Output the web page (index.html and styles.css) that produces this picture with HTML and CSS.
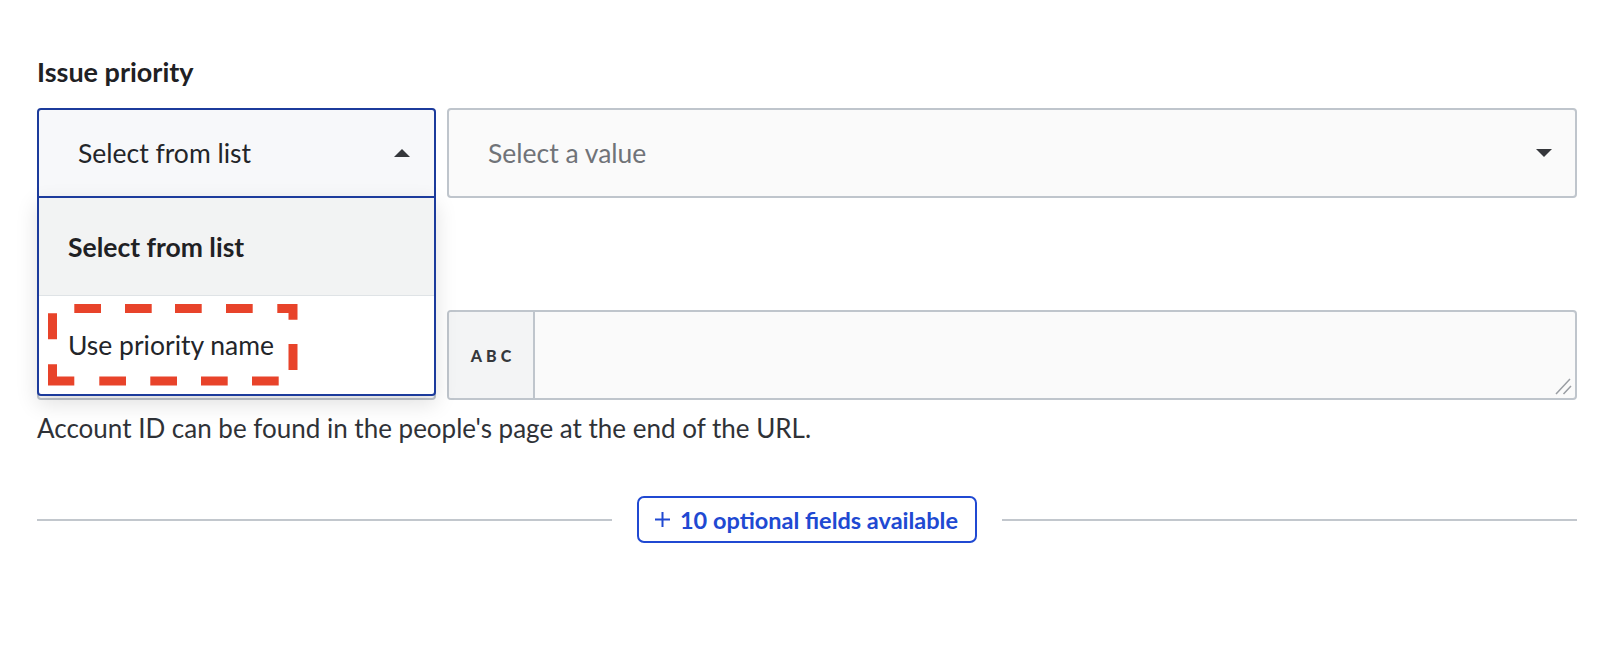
FILE: index.html
```html
<!DOCTYPE html>
<html lang="en">
<head>
<meta charset="utf-8">
<title>Issue priority</title>
<link rel="stylesheet" href="styles.css">
</head>
<body>
<div class="page">
  <div class="field-label">Issue priority</div>

  <div class="row">
    <div class="picker">
      <div class="select select-open">
        <span class="select-text">Select from list</span>
        <svg class="caret" width="16" height="8" viewBox="0 0 16 8"><path d="M0 8 L8 0 L16 8 Z" fill="#35373b"/></svg>
      </div>
      <div class="menu">
        <div class="menu-header">Select from list</div>
        <div class="menu-option">
          <span>Use priority name</span>
          <svg class="annot" width="250" height="82" viewBox="0 0 250 82">
            <path d="M4.5 4.5 H245 V77 H4.5 Z" fill="none" stroke="#e8432a" stroke-width="9" stroke-linejoin="miter" stroke-dasharray="0 21.8 26.7 24 26.7 23.3 26.7 24.3 26.7 24.6 26.9 24.3 26 25.3 26.7 24.3 26.7 24 26.7 24.3 26.7 25 38.5 25 26 3.8"/>
          </svg>
        </div>
      </div>
    </div>
    <div class="select select-value">
      <span class="placeholder">Select a value</span>
      <svg class="caret" width="16" height="8" viewBox="0 0 16 8"><path d="M0 0 L16 0 L8 8 Z" fill="#35373b"/></svg>
    </div>
  </div>

  <div class="row row-second">
    <div class="select select-under"></div>
    <div class="text-field">
      <div class="prefix">ABC</div>
      <div class="text-body">
        <svg class="grip" width="20" height="20" viewBox="0 0 20 20"><path d="M16 2 L2 17 M17 9 L9.5 17" stroke="#9a9ea3" stroke-width="1.5" fill="none"/></svg>
      </div>
    </div>
  </div>

  <p class="help">Account ID can be found in the people's page at the end of the URL.</p>

  <div class="divider">
    <span class="rule"></span>
    <button class="more" type="button">
      <svg width="15" height="15" viewBox="0 0 15 15"><path d="M7.5 0 V15 M0 7.5 H15" stroke="#2049d2" stroke-width="2"/></svg>
      <span>10 optional fields available</span>
    </button>
    <span class="rule"></span>
  </div>
</div>
</body>
</html>
```

FILE: styles.css
```css
* { box-sizing: border-box; }

html, body {
  margin: 0;
  padding: 0;
  background: #ffffff;
}

body {
  font-family: "Lato", "Liberation Sans", sans-serif;
  color: #232529;
  width: 1608px;
  height: 650px;
  overflow: hidden;
}

.page {
  padding: 56px 31px 0 37px;
}

.field-label {
  font-weight: 700;
  font-size: 27px;
  line-height: 32px;
  height: 32px;
  margin-bottom: 20px;
  color: #1f2124;
}

.row {
  display: flex;
  gap: 11px;
  height: 90px;
}

.row-second {
  margin-top: 112px;
}

.picker {
  position: relative;
  width: 399px;
  flex: none;
}

.select {
  height: 90px;
  border: 2px solid #bfc5cc;
  border-radius: 4px;
  background: #fafafa;
  display: flex;
  align-items: center;
  justify-content: space-between;
  padding: 0 24px 0 39px;
  font-size: 26.5px;
}

.select-open {
  border-color: #1c3b9c;
  border-radius: 4px 4px 0 0;
  background: #f7f8fa;
  padding-right: 24px;
}

.select-value {
  flex: 1;
  padding-left: 39px;
  padding-right: 23px;
}

.select-under {
  width: 399px;
  flex: none;
}

.select-text { color: #232529; }

.placeholder { color: #707378; }

.caret { flex: none; }

.menu {
  position: absolute;
  top: 88px;
  left: 0;
  width: 399px;
  z-index: 10;
  background: #ffffff;
  border: 2px solid #1c3b9c;
  border-radius: 0 0 4px 4px;
  box-shadow: 0 8px 22px rgba(0, 0, 0, 0.12);
}

.menu-header {
  height: 98px;
  display: flex;
  align-items: center;
  padding-left: 29px;
  background: #f2f3f3;
  border-bottom: 1px solid #dfe3e6;
  font-weight: 700;
  font-size: 26.5px;
  color: #1f2124;
}

.menu-option {
  position: relative;
  height: 98px;
  display: flex;
  align-items: center;
  padding-left: 29px;
  font-size: 26.5px;
  color: #232529;
}

.annot {
  position: absolute;
  left: 9px;
  top: 8px;
}

.text-field {
  flex: 1;
  display: flex;
  border: 2px solid #bfc5cc;
  border-radius: 4px;
  background: #fafafa;
  overflow: hidden;
}

.prefix {
  width: 86px;
  flex: none;
  display: flex;
  align-items: center;
  justify-content: center;
  padding-left: 4px;
  background: #f3f4f5;
  border-right: 2px solid #bfc5cc;
  font-weight: 900;
  font-size: 16px;
  letter-spacing: 4px;
  color: #35383c;
}

.text-body {
  flex: 1;
  position: relative;
}

.grip {
  position: absolute;
  right: 1px;
  bottom: 1px;
}

.help {
  margin: 12px 0 0 0;
  font-size: 26px;
  line-height: 32px;
  color: #2f3237;
}

.divider {
  margin-top: 52px;
  display: flex;
  align-items: center;
  gap: 25px;
}

.rule {
  flex: 1;
  height: 2px;
  background: #c2c7cd;
}

.more {
  height: 47px;
  display: flex;
  align-items: center;
  gap: 10px;
  padding: 0 17px 0 16px;
  border: 2px solid #2049d2;
  border-radius: 7px;
  background: #ffffff;
  color: #2049d2;
  font-family: "Lato", "Liberation Sans", sans-serif;
  font-weight: 700;
  font-size: 23.5px;
}
```
